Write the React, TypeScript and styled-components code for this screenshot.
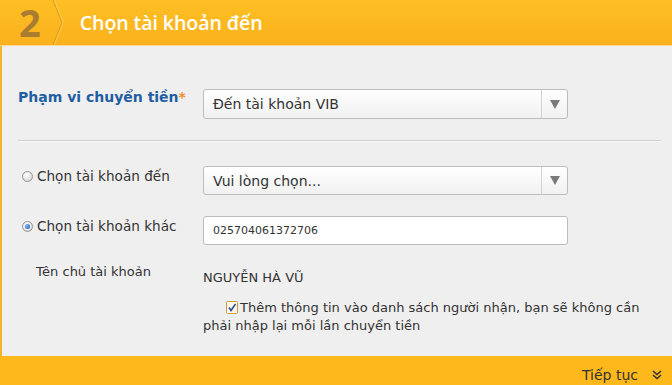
import React from "react";
import styled, { createGlobalStyle } from "styled-components";

const GlobalStyle = createGlobalStyle`
  html, body {
    margin: 0;
    padding: 0;
    background: #efefef;
  }
  body {
    font-family: "DejaVu Sans", Verdana, sans-serif;
    color: #333;
  }
`;

const Page = styled.div`
  width: 672px;
  height: 385px;
  display: flex;
  flex-direction: column;
  overflow: hidden;
`;

const Header = styled.div`
  height: 45px;
  flex: none;
  display: flex;
  align-items: center;
  padding-left: 19px;
  background: linear-gradient(#fdbf23, #fbb11d);
  border-bottom: 1px solid #fad796;
`;

const StepNo = styled.span`
  display: block;
  font-family: "Open Sans", sans-serif;
  font-weight: 700;
  font-size: 38px;
  line-height: 1.15;
  color: #a97c30;
`;

const Chevron = styled.svg`
  margin-left: 11px;
  flex: none;
`;

const Title = styled.h1`
  margin: 0 0 0 16px;
  font-family: "Open Sans", sans-serif;
  font-weight: 600;
  font-size: 19.6px;
  line-height: 1.2;
  color: #fff;
  letter-spacing: -0.1px;
`;

const Body = styled.div`
  flex: 1;
  border-left: 2px solid #f5b52a;
  padding: 43px 12px 0 16px;
`;

const Row = styled.div<{ $mb: number }>`
  display: grid;
  grid-template-columns: 185px 365px;
  align-items: start;
  margin-bottom: ${(p) => p.$mb}px;
`;

const ScopeLabel = styled.label`
  font-size: 14px;
  font-weight: 700;
  color: #1f5ea3;
  line-height: 16px;

  span {
    color: #f08b2a;
  }
`;

const Select = styled.div<{ $h: number }>`
  height: ${(p) => p.$h}px;
  box-sizing: border-box;
  border: 1px solid #bcbcbc;
  border-radius: 3px;
  background: linear-gradient(#ffffff, #f1f1f1);
  display: flex;
  align-items: center;
  font-size: 14px;
  color: #333;
`;

const SelectText = styled.span`
  flex: 1;
  padding-left: 9px;
`;

const Arrow = styled.span`
  width: 25px;
  align-self: stretch;
  border-left: 1px solid #d3d3d3;
  display: flex;
  align-items: center;
  justify-content: center;

  &::after {
    content: "";
    border-left: 5px solid transparent;
    border-right: 5px solid transparent;
    border-top: 9px solid #7a7a7a;
  }
`;

const Divider = styled.hr`
  margin: 0 0 24px 0;
  width: 643px;
  border: 0;
  height: 1px;
  background: #d0d0d0;
  border-bottom: 1px solid #f8f8f8;
`;

const RadioLabel = styled.label`
  display: flex;
  align-items: center;
  gap: 4px;
  font-size: 13.6px;
  line-height: 20px;
  padding-left: 4px;
`;

const Radio = styled.span<{ $on?: boolean }>`
  width: 11px;
  height: 11px;
  flex: none;
  box-sizing: border-box;
  border-radius: 50%;
  border: 1px solid #959595;
  background: radial-gradient(circle at 40% 35%, #ffffff, #cfcfcf);
  display: flex;
  align-items: center;
  justify-content: center;

  &::after {
    content: "";
    display: ${(p) => (p.$on ? "block" : "none")};
    width: 5px;
    height: 5px;
    border-radius: 50%;
    background: radial-gradient(circle at 35% 35%, #7fb4f0, #1f5fb8);
  }
`;

const Input = styled.div`
  height: 29px;
  box-sizing: border-box;
  border: 1px solid #bcbcbc;
  border-radius: 3px;
  background: #fff;
  display: flex;
  align-items: center;
  padding-left: 9px;
  font-size: 11px;
  color: #333;
`;

const InfoRow = styled.div`
  display: grid;
  grid-template-columns: 185px 450px;
`;

const InfoLabel = styled.span`
  font-size: 13px;
  padding-left: 18px;
  line-height: 16px;
`;

const InfoValue = styled.span`
  font-size: 13px;
  line-height: 16px;
  padding-top: 6px;
`;

const Note = styled.div`
  margin-left: 185px;
  margin-top: 13px;
  font-size: 13px;
  line-height: 18px;
  width: 445px;
`;

const Check = styled.svg`
  margin-left: 23px;
  margin-right: 2px;
  vertical-align: -2px;
`;

const Footer = styled.div`
  height: 29px;
  flex: none;
  box-sizing: border-box;
  padding: 8px 10px 0 0;
  background: #fdb81c;
  display: flex;
  align-items: center;
  justify-content: flex-end;
  gap: 14px;
  font-size: 14px;
  color: #333;
`;

export default function App() {
  return (
    <Page>
      <GlobalStyle />
      <Header>
        <StepNo>2</StepNo>
        <Chevron width="12" height="45" viewBox="0 0 12 45">
          <polyline points="1,0 10,22.5 1,45" fill="none" stroke="#d99a1b" strokeWidth="1" />
          <polyline points="2.2,0 11.2,22.5 2.2,45" fill="none" stroke="#fdd06a" strokeWidth="0.8" />
        </Chevron>
        <Title>Chọn tài khoản đến</Title>
      </Header>
      <Body>
        <Row $mb={21}>
          <ScopeLabel>
            Phạm vi chuyển tiền<span>*</span>
          </ScopeLabel>
          <Select $h={30}>
            <SelectText>Đến tài khoản VIB</SelectText>
            <Arrow />
          </Select>
        </Row>
        <Divider />
        <Row $mb={21}>
          <RadioLabel>
            <Radio />
            Chọn tài khoản đến
          </RadioLabel>
          <Select $h={29}>
            <SelectText>Vui lòng chọn...</SelectText>
            <Arrow />
          </Select>
        </Row>
        <Row $mb={19}>
          <RadioLabel>
            <Radio $on />
            Chọn tài khoản khác
          </RadioLabel>
          <Input>025704061372706</Input>
        </Row>
        <InfoRow>
          <InfoLabel>Tên chủ tài khoản</InfoLabel>
          <InfoValue>NGUYỄN HÀ VŨ</InfoValue>
        </InfoRow>
        <Note>
          <Check width="12" height="13" viewBox="0 0 12 13">
            <rect x="0.5" y="0.5" width="11" height="12" rx="1" fill="#fdf6e6" stroke="#c89b45" />
            <polyline points="3,6.5 5,9.5 9.5,3" fill="none" stroke="#2a4f9e" strokeWidth="1.6" />
          </Check>
          Thêm thông tin vào danh sách người nhận, bạn sẽ không cần phải nhập lại mỗi lần chuyển tiền
        </Note>
      </Body>
      <Footer>
        <span>Tiếp tục</span>
        <svg width="10" height="10" viewBox="0 0 10 10">
          <polyline points="1,1 5,4.5 9,1" fill="none" stroke="#333" strokeWidth="1.6" />
          <polyline points="1,5 5,8.5 9,5" fill="none" stroke="#333" strokeWidth="1.6" />
        </svg>
      </Footer>
    </Page>
  );
}
